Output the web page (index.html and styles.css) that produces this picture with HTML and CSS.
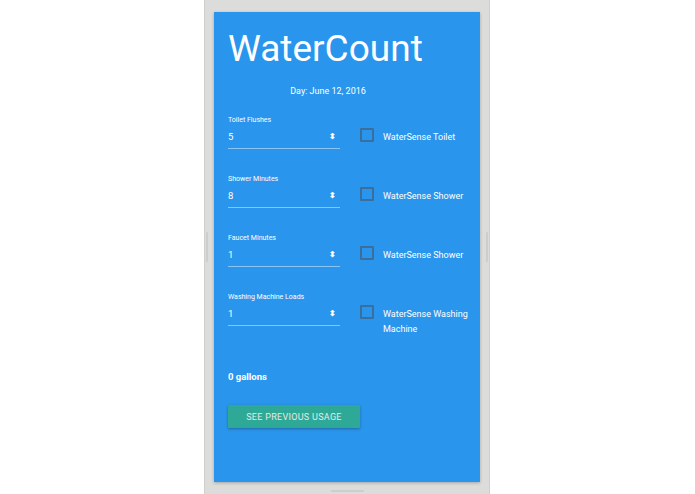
FILE: index.html
```html
<!DOCTYPE html>
<html>
<head>
<meta charset="utf-8">
<link rel="stylesheet" href="styles.css">
</head>
<body>
<div class="device">
  <div class="handle handle-left"></div>
  <div class="handle handle-right"></div>
  <div class="handle handle-bottom"></div>
  <div class="card">
    <h1 class="title">WaterCount</h1>
    <div class="day">Day: June 12, 2016</div>
    <div class="rows">
      <div class="row">
        <div class="field">
          <div class="label">Toilet Flushes</div>
          <div class="input"><span class="value">5</span><span class="spin">&#x2B0D;</span></div>
        </div>
        <div class="check"><span class="box"></span><span class="check-label">WaterSense Toilet</span></div>
      </div>
      <div class="row">
        <div class="field">
          <div class="label">Shower Minutes</div>
          <div class="input"><span class="value">8</span><span class="spin">&#x2B0D;</span></div>
        </div>
        <div class="check"><span class="box"></span><span class="check-label">WaterSense Shower</span></div>
      </div>
      <div class="row">
        <div class="field">
          <div class="label">Faucet Minutes</div>
          <div class="input"><span class="value">1</span><span class="spin">&#x2B0D;</span></div>
        </div>
        <div class="check"><span class="box"></span><span class="check-label">WaterSense Shower</span></div>
      </div>
      <div class="row">
        <div class="field">
          <div class="label">Washing Machine Loads</div>
          <div class="input"><span class="value">1</span><span class="spin">&#x2B0D;</span></div>
        </div>
        <div class="check"><span class="box"></span><span class="check-label">WaterSense Washing Machine</span></div>
      </div>
    </div>
    <div class="total">0 gallons</div>
    <button class="btn">SEE PREVIOUS USAGE</button>
  </div>
</div>
</body>
</html>
```
FILE: styles.css
```css
html, body {
  margin: 0;
  padding: 0;
  background: #ffffff;
  font-family: Roboto, "Liberation Sans", sans-serif;
}
body {
  display: flex;
  justify-content: flex-start;
  height: 494px;
  overflow: hidden;
}
.device {
  position: relative;
  margin-left: 204px;
  width: 286px;
  height: 494px;
  box-sizing: border-box;
  padding: 12px 9px;
  background: #dcdddb;
  border-left: 1px solid #cfd0ce;
  border-right: 1px solid #cfd0ce;
}
.handle {
  position: absolute;
  background: #cdcecc;
  border-radius: 1px;
}
.handle-left { left: 1px; top: 232px; width: 2px; height: 30px; }
.handle-right { right: 1px; top: 232px; width: 2px; height: 30px; }
.handle-bottom { left: 126px; bottom: 2px; width: 33px; height: 2px; }
.card {
  width: 266px;
  height: 470px;
  box-sizing: border-box;
  background: #2a95ec;
  box-shadow: 0 1px 3px rgba(0,0,0,0.25);
  padding: 15px 0 0 14px;
  color: #ffffff;
}
.title {
  margin: 0;
  font-size: 37px;
  font-weight: 400;
  line-height: 44px;
}
.day {
  margin-top: 14px;
  width: 200px;
  text-align: center;
  font-size: 9px;
  line-height: 12px;
}
.rows {
  margin-top: 19px;
  display: flex;
  flex-direction: column;
  gap: 11px;
}
.row {
  display: flex;
  align-items: flex-start;
  height: 48px;
}
.field {
  width: 112px;
  flex: none;
}
.label {
  font-size: 7px;
  line-height: 9px;
  height: 9px;
}
.input {
  display: flex;
  justify-content: space-between;
  align-items: center;
  height: 23px;
  margin-top: 0;
  padding-right: 4px;
  border-bottom: 1px solid rgba(255,255,255,0.45);
  font-size: 9.5px;
}
.spin {
  font-size: 8px;
  font-weight: bold;
}
.check {
  display: flex;
  align-items: flex-start;
  margin-left: 20px;
  margin-top: 12px;
}
.box {
  flex: none;
  width: 10px;
  height: 10px;
  border: 2px solid #3a6f9d;
  border-radius: 1px;
}
.check-label {
  margin-left: 9px;
  margin-top: 2px;
  width: 92px;
  font-size: 9px;
  line-height: 15px;
}
.total {
  margin-top: 30px;
  font-size: 9.5px;
  font-weight: bold;
  line-height: 12px;
}
.btn {
  display: block;
  margin-top: 22px;
  width: 132px;
  height: 23px;
  border: none;
  border-radius: 1px;
  background: #2ea998;
  color: #e2ebe7;
  font-family: Roboto, "Liberation Sans", sans-serif;
  font-size: 9px;
  letter-spacing: 0.3px;
  box-shadow: 0 1px 3px rgba(0,0,0,0.3);
  padding: 0;
}
```
